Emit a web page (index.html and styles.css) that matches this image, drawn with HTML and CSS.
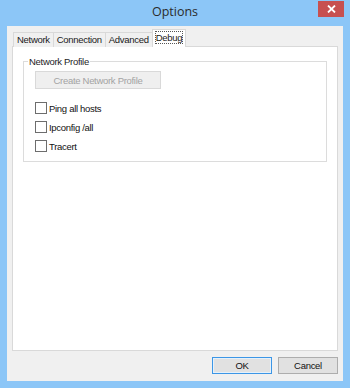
FILE: index.html
```html
<!DOCTYPE html>
<html lang="en">
  <head>
    <meta charset="UTF-8" />
    <meta name="viewport" content="width=device-width, initial-scale=1.0" />
    <title>Options</title>
    <link rel="stylesheet" href="styles.css">
  </head>
  <body>
    <div class="window">
      <div class="titlebar">
        <span></span>
        <span class="title">Options</span>
        <span class="close">
          <svg width="9" height="8" viewBox="0 0 9 8">
            <path d="M1 0.5 L8 7.5 M8 0.5 L1 7.5" stroke="#fff" stroke-width="1.8" />
          </svg>
        </span>
      </div>
      <div class="client">
        <div class="tabs">
          <div class="tab">Network</div>
          <div class="tab">Connection</div>
          <div class="tab">Advanced</div>
          <div class="tab active"><span class="focus">Debug</span></div>
        </div>
        <div class="panel">
          <fieldset class="group">
            <legend>Network Profile</legend>
            <button class="btn" disabled>Create Network Profile</button>
            <div class="checks">
              <label class="check"><span class="box"></span>Ping all hosts</label>
              <label class="check"><span class="box"></span>Ipconfig /all</label>
              <label class="check"><span class="box"></span>Tracert</label>
            </div>
          </fieldset>
        </div>
        <div class="actions">
          <button class="btn default">OK</button>
          <button class="btn">Cancel</button>
        </div>
      </div>
    </div>
  </body>
</html>
```

FILE: styles.css
```css
body {
  margin: 0;
  padding: 0;
  font-family: "Liberation Sans", Arial, sans-serif;
  font-size: 9.5px;
  letter-spacing: -0.3px;
  color: #000;
}

.window {
  width: 350px;
  height: 388px;
  box-sizing: border-box;
  background: #8cc6f7;
  padding: 0 7px 7px 7px;
  display: flex;
  flex-direction: column;
}

.titlebar {
  height: 26px;
  display: grid;
  grid-template-columns: 1fr auto 1fr;
  align-items: start;
}

.title {
  font-family: "Open Sans", "Liberation Sans", sans-serif;
  font-size: 12.5px;
  letter-spacing: 0;
  color: #2b2b2b;
  line-height: 26px;
  margin-top: -1px;
}

.close {
  justify-self: end;
  margin-right: -1px;
  margin-top: 1px;
  width: 26px;
  height: 16px;
  background: #c75050;
  display: flex;
  align-items: center;
  justify-content: center;
}

.client {
  flex: 1;
  background: #f0f0f0;
  padding: 4px 5px 7px 5px;
  display: flex;
  flex-direction: column;
}

.tabs {
  display: flex;
  align-items: flex-end;
  height: 17px;
  padding-left: 1px;
  position: relative;
  z-index: 1;
}

.tab {
  height: 14px;
  line-height: 14px;
  padding: 0 3px;
  background: #f0f0f0;
  border: 1px solid #d9d9d9;
  border-bottom: none;
  margin-right: -1px;
  color: #1a1a1a;
}

.tab.active {
  height: 17px;
  line-height: 16px;
  background: #fff;
  padding: 0 3px;
}

.focus {
  outline: 1px dotted #555;
  outline-offset: 0;
}

.panel {
  flex: 1;
  background: #fff;
  border: 1px solid #d9d9d9;
  margin-top: -1px;
  padding: 9px 10px 0 10px;
}

.group {
  margin: 0;
  padding: 4px 11px 6px 11px;
  border: 1px solid #dcdcdc;
  height: 106px;
  box-sizing: border-box;
}

.group legend {
  padding: 0 1px;
  margin-left: -7px;
  color: #1e1e1e;
}

.btn {
  font-family: "Liberation Sans", Arial, sans-serif;
  font-size: 9.5px;
  letter-spacing: -0.3px;
  height: 17px;
  padding: 0;
  background: #e1e1e1;
  border: 1px solid #adadad;
  color: #111;
}

.group .btn {
  width: 126px;
  height: 18px;
  background: #efefef;
  border-color: #d9d9d9;
  color: #a3a3a3;
}

.checks {
  margin-top: 12px;
  display: flex;
  flex-direction: column;
  gap: 5px;
}

.check {
  display: flex;
  align-items: center;
  height: 14px;
  color: #111;
}

.box {
  width: 10px;
  height: 10px;
  border: 1px solid #6d6d6d;
  background: #fff;
  margin-right: 2px;
}

.actions {
  display: flex;
  justify-content: flex-end;
  gap: 6px;
  padding-top: 6px;
}

.actions .btn {
  width: 60px;
}

.actions .btn.default {
  border-color: #3c96e6;
  box-shadow: inset 0 0 0 1px #e5f1fb;
}
```
